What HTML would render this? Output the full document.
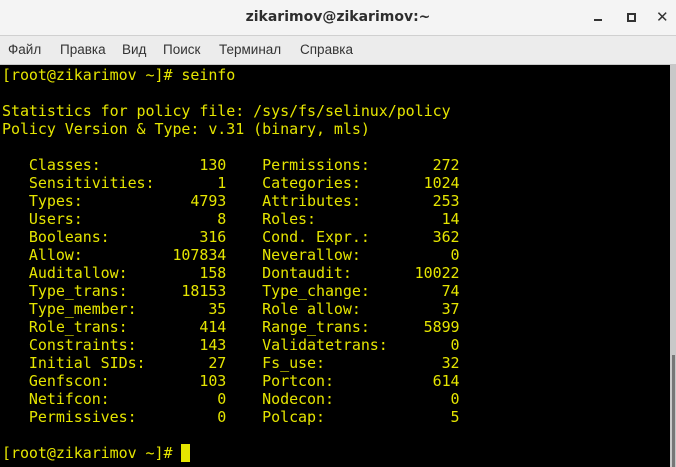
<!DOCTYPE html>
<html><head><meta charset="utf-8"><style>
*{margin:0;padding:0;box-sizing:border-box}
body{width:676px;height:467px;overflow:hidden;background:#000;position:relative;font-family:"Liberation Sans","DejaVu Sans",sans-serif}
#title{position:absolute;left:0;top:0;width:676px;height:36px;background:#f4f4f4;border-bottom:1px solid #d0d0d0}
#title .t{position:absolute;left:0;width:676px;top:9px;text-align:center;font-size:14px;font-weight:bold;color:#2e2e2e;font-family:"DejaVu Sans",sans-serif}
#menu{position:absolute;left:0;top:36px;width:676px;height:29px;background:#ececec;border-bottom:1px solid #c8c8c8}
#menu span{position:absolute;top:6px;font-size:13.5px;color:#333}
#term{position:absolute;left:0;top:65px;width:670px;height:402px;background:#000}
pre{position:absolute;left:2px;top:66px;font-family:"DejaVu Sans Mono",monospace;font-size:15px;line-height:18px;color:#e5e500;letter-spacing:-0.06px}
.cur{display:inline-block;width:9px;height:18px;background:#e5e500;vertical-align:top}
#sb{position:absolute;left:670px;top:65px;width:6px;height:402px;background:#c8c8c8}
#sb2{position:absolute;left:672px;top:355px;width:3px;height:112px;background:#777}
</style></head><body>
<div id="title"><div class="t">zikarimov@zikarimov:~</div>
<div style="position:absolute;left:594px;top:19px;width:8px;height:2px;background:#333"></div>
<div style="position:absolute;left:627px;top:13px;width:9px;height:9px;border:2px solid #333"></div>
<div style="position:absolute;left:656px;top:8px;font-size:15px;font-weight:bold;color:#333">✕</div>
</div>
<div id="menu"><span style="left:8px">Файл</span><span style="left:60px">Правка</span><span style="left:122px">Вид</span><span style="left:163px">Поиск</span><span style="left:219px">Терминал</span><span style="left:300px">Справка</span></div>
<div id="term"></div>
<pre>[root@zikarimov ~]# seinfo

Statistics for policy file: /sys/fs/selinux/policy
Policy Version &amp; Type: v.31 (binary, mls)

   Classes:           130    Permissions:       272
   Sensitivities:       1    Categories:       1024
   Types:            4793    Attributes:        253
   Users:               8    Roles:              14
   Booleans:          316    Cond. Expr.:       362
   Allow:          107834    Neverallow:          0
   Auditallow:        158    Dontaudit:       10022
   Type_trans:      18153    Type_change:        74
   Type_member:        35    Role allow:         37
   Role_trans:        414    Range_trans:      5899
   Constraints:       143    Validatetrans:       0
   Initial SIDs:       27    Fs_use:             32
   Genfscon:          103    Portcon:           614
   Netifcon:            0    Nodecon:             0
   Permissives:         0    Polcap:              5

[root@zikarimov ~]# <span class="cur"></span></pre>
<div id="sb"></div><div id="sb2"></div>
</body></html>
